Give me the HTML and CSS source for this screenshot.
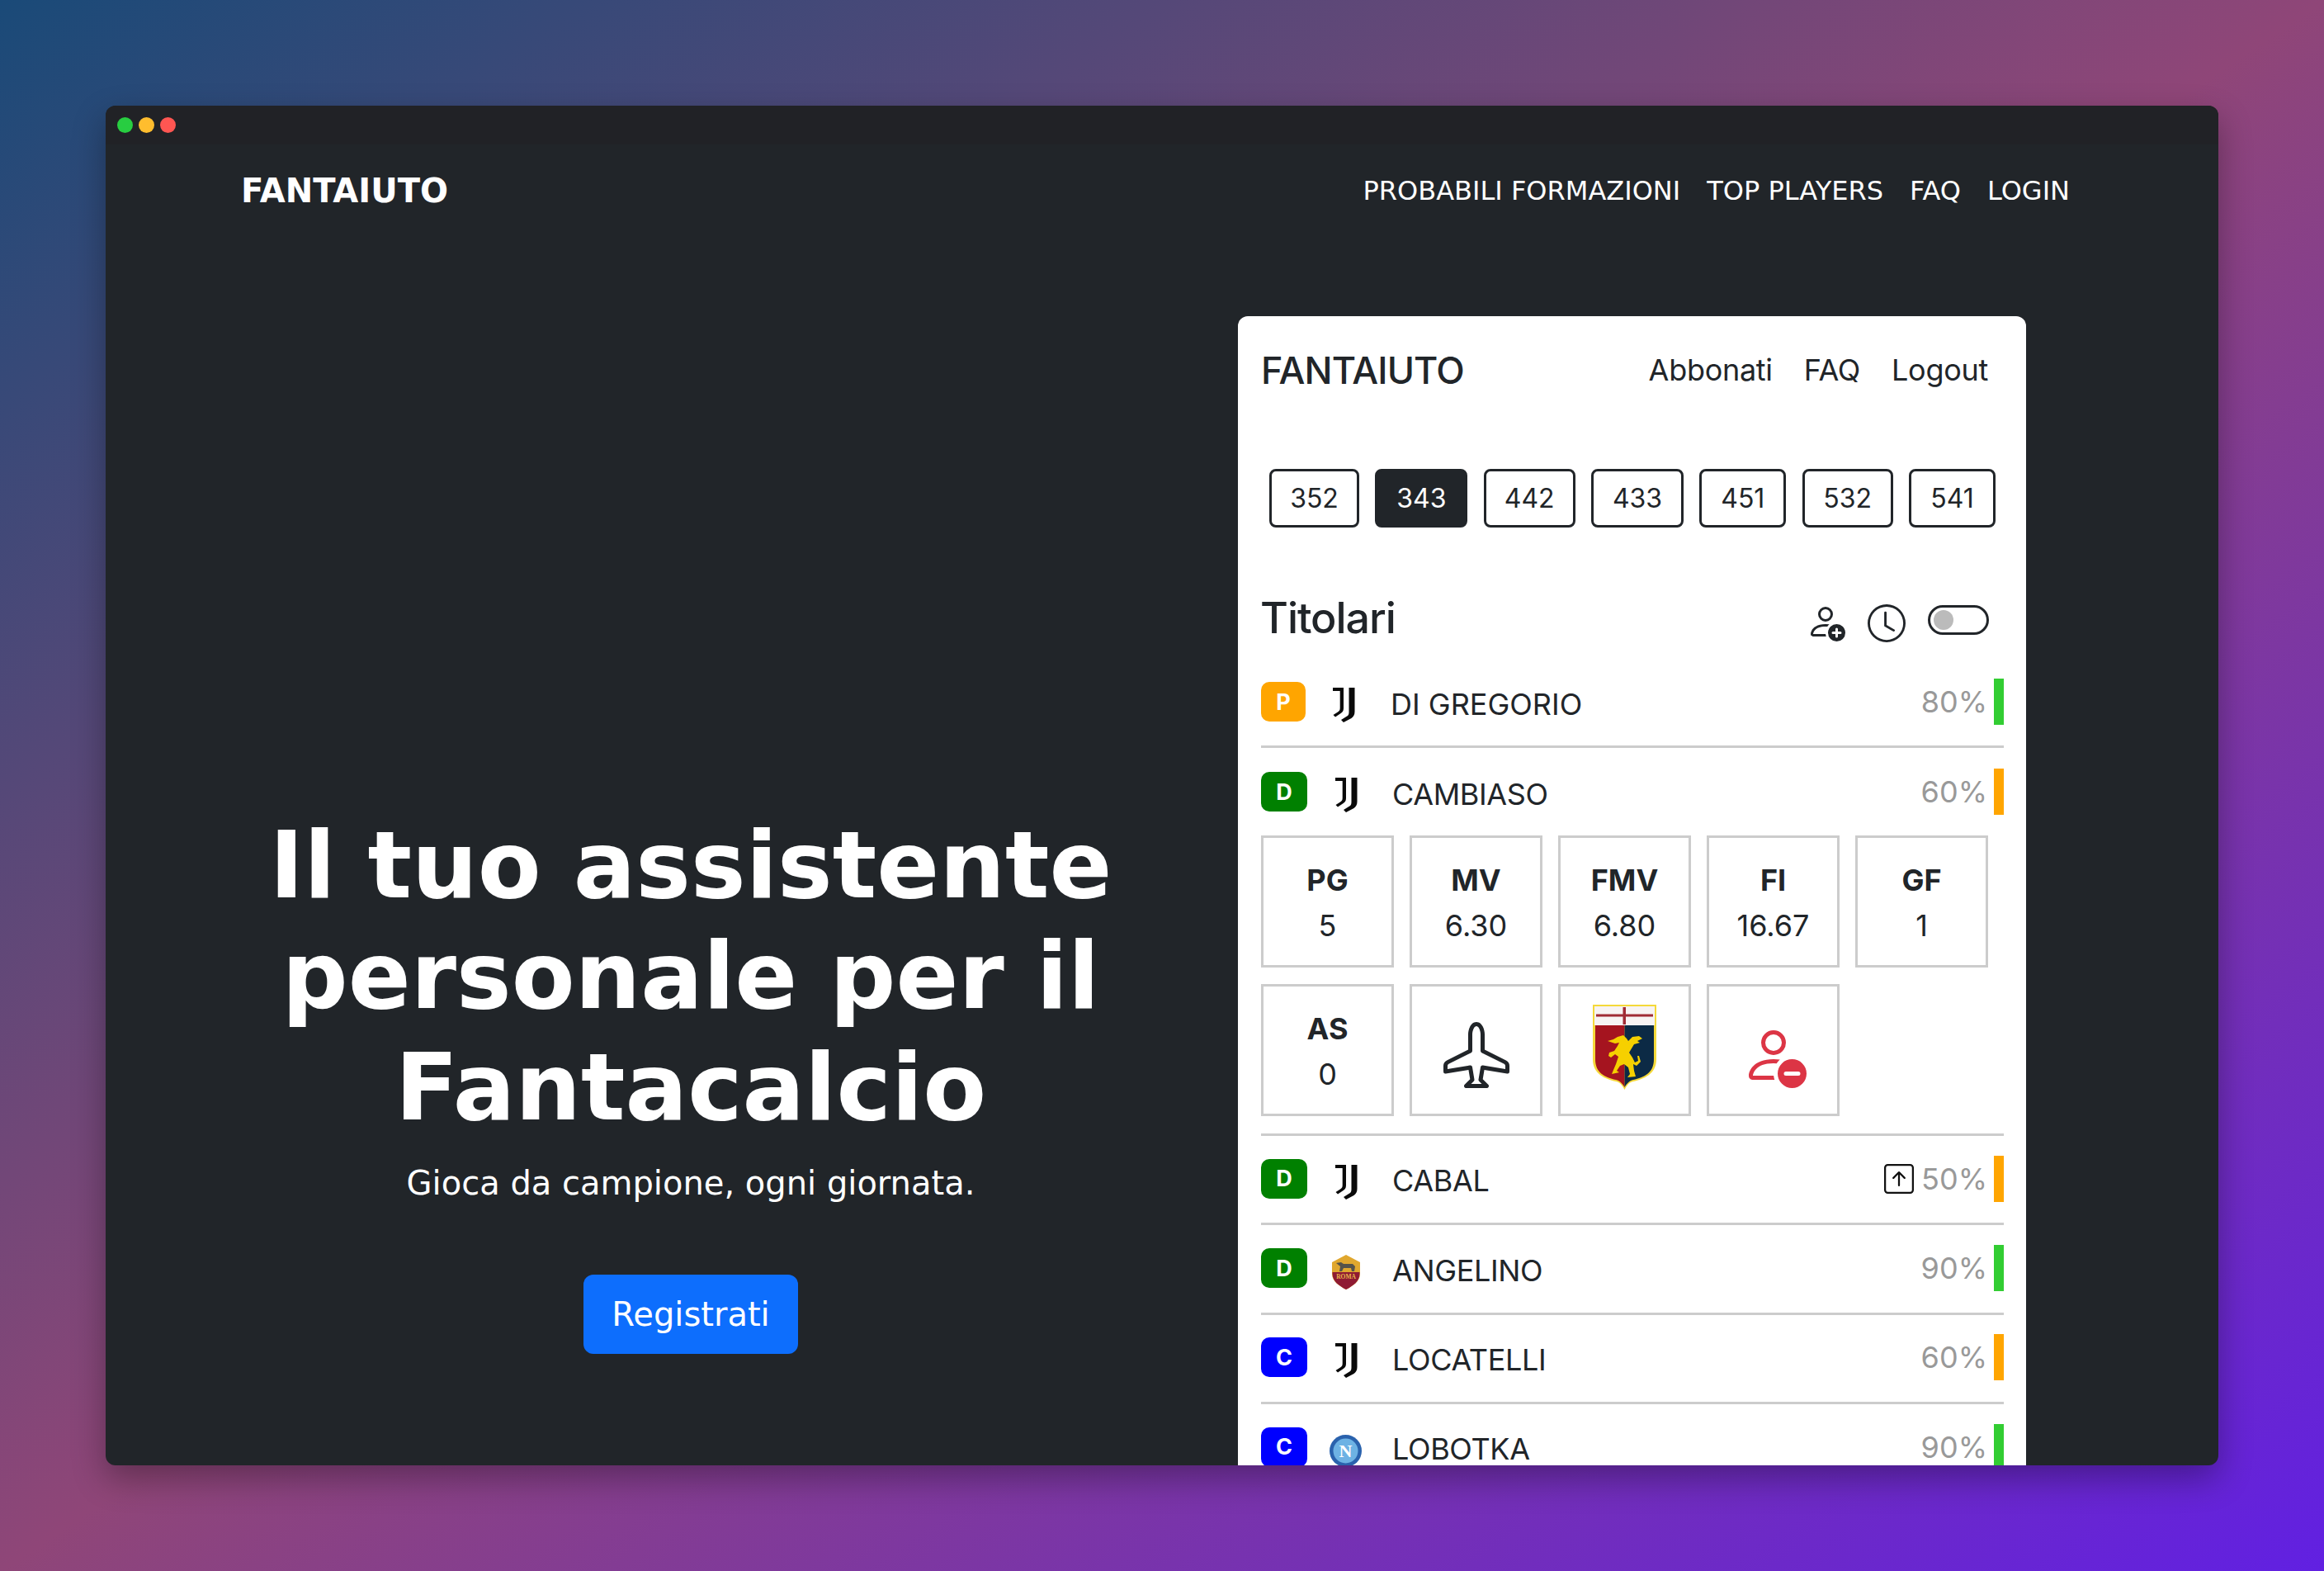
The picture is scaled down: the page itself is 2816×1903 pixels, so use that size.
FILE: index.html
```html
<!DOCTYPE html>
<html lang="it">
<head>
<meta charset="utf-8">
<title>Fantaiuto</title>
<link rel="stylesheet" href="styles.css">
</head>
<body>
<svg class="defs" width="0" height="0" aria-hidden="true">
  <defs>
    <symbol id="juve" viewBox="0 0 28 42">
      <path d="M0 0H13V25C13 28.500 11.500 30 9 31.500L3 35.500L0.500 33L6 29.500C8 28 8.700 27 8.700 24.500V4H0Z" fill="#0a0a0a"/>
      <path d="M19.500 0H26.500V29C26.500 33 25 35 22.500 37L13 42L10 39L18 34C19 33 19.500 32 19.500 29.500Z" fill="#0a0a0a"/>
    </symbol>
  </defs>
</svg>
<main class="window">
  <div class="titlebar">
    <span class="dot dot-green"></span>
    <span class="dot dot-yellow"></span>
    <span class="dot dot-red"></span>
  </div>
  <nav class="topnav">
    <a class="brand">FANTAIUTO</a>
    <ul class="navlinks">
      <li>PROBABILI FORMAZIONI</li>
      <li>TOP PLAYERS</li>
      <li>FAQ</li>
      <li>LOGIN</li>
    </ul>
  </nav>
  <section class="hero">
    <div class="hero-text">
      <h1>Il tuo assistente personale per il Fantacalcio</h1>
      <p>Gioca da campione, ogni giornata.</p>
      <a class="cta">Registrati</a>
    </div>
    <div class="phone">
      <header class="app-head">
        <span class="app-brand">FANTAIUTO</span>
        <span class="app-links"><a>Abbonati</a><a>FAQ</a><a>Logout</a></span>
      </header>
      <div class="pills">
        <button class="pill w109">352</button>
        <button class="pill w112 active">343</button>
        <button class="pill w111">442</button>
        <button class="pill w112">433</button>
        <button class="pill w105">451</button>
        <button class="pill w110">532</button>
        <button class="pill w105">541</button>
      </div>
      <div class="section-head">
        <h2>Titolari</h2>
        <div class="tools">
          <svg class="ico-add" viewBox="0 0 16 16" fill="#212529"><path d="M12.500 16a3.500 3.500 0 1 0 0-7 3.500 3.500 0 0 0 0 7m.5-5v1h1a.5.5 0 0 1 0 1h-1v1a.5.5 0 0 1-1 0v-1h-1a.5.5 0 0 1 0-1h1v-1a.5.5 0 0 1 1 0m-2-6a3 3 0 1 1-6 0 3 3 0 0 1 6 0M8 7a2 2 0 1 0 0-4 2 2 0 0 0 0 4"/><path d="M8.256 14a4.500 4.500 0 0 1-.229-1.004H3c.001-.246.154-.986.832-1.664C4.484 10.680 5.711 10 8 10q.39 0 .74.025c.226-.341.496-.65.804-.918Q8.844 9.002 8 9c-5 0-6 3-6 4s1 1 1 1z"/></svg>
          <svg class="ico-clock" viewBox="0 0 16 16" fill="#212529"><path d="M8 3.500a.5.5 0 0 0-1 0V9a.5.5 0 0 0 .252.434l3.500 2a.5.5 0 0 0 .496-.868L8 8.710z"/><path d="M8 16A8 8 0 1 0 8 0a8 8 0 0 0 0 16m7-8A7 7 0 1 1 1 8a7 7 0 0 1 14 0"/></svg>
          <span class="switch"><span class="knob"></span></span>
        </div>
      </div>

      <div class="row first">
        <span class="badge badge-p">P</span>
        <svg class="crest crest-first"><use href="#juve"/></svg>
        <span class="name name-first">DI GREGORIO</span>
        <span class="pct">80%</span>
        <span class="bar bar-green"></span>
      </div>

      <div class="row expanded">
        <span class="badge badge-d">D</span>
        <svg class="crest"><use href="#juve"/></svg>
        <span class="name">CAMBIASO</span>
        <span class="pct">60%</span>
        <span class="bar bar-orange"></span>
      </div>
      <div class="stats">
        <div class="stat"><b>PG</b><span>5</span></div>
        <div class="stat"><b>MV</b><span>6.30</span></div>
        <div class="stat"><b>FMV</b><span>6.80</span></div>
        <div class="stat"><b>FI</b><span>16.67</span></div>
        <div class="stat"><b>GF</b><span>1</span></div>
        <div class="stat"><b>AS</b><span>0</span></div>
        <div class="stat">
          <svg class="ico-plane" viewBox="0 0 16 16" fill="#212529"><path d="M6.428 1.151C6.708.591 7.213 0 8 0s1.292.592 1.572 1.151C9.861 1.730 10 2.431 10 3v3.691l5.170 2.585a1.500 1.500 0 0 1 .83 1.342V12a.5.5 0 0 1-.582.493l-5.507-.918-.375 2.253 1.318 1.318A.5.5 0 0 1 10.500 16h-5a.5.5 0 0 1-.354-.854l1.319-1.318-.376-2.253-5.507.918A.5.5 0 0 1 0 12v-1.382a1.500 1.500 0 0 1 .83-1.342L6 6.691V3c0-.568.14-1.271.428-1.849m.894.448C7.111 2.020 7 2.569 7 3v4a.5.5 0 0 1-.276.447l-5.448 2.724a.5.5 0 0 0-.276.447v.792l5.418-.903a.5.5 0 0 1 .575.41l.5 3a.5.5 0 0 1-.14.437L6.708 15h2.586l-.647-.646a.5.5 0 0 1-.14-.436l.5-3a.5.5 0 0 1 .576-.411L15 11.410v-.792a.5.5 0 0 0-.276-.447L9.276 7.447A.5.5 0 0 1 9 7V3c0-.432-.11-.979-.322-1.401C8.458 1.159 8.213 1 8 1s-.458.158-.678.599"/></svg>
        </div>
        <div class="stat">
          <svg class="genoa" viewBox="0 0 77 103">
            <path d="M0 0H77V66C77 84 62 90 49 93C44 94 41 98 38.500 103C36 98 33 94 28 93C15 90 0 84 0 66Z" fill="#f5d93a"/>
            <rect x="2" y="2" width="73" height="23" fill="#f7f3f3"/>
            <path d="M3 25H38.500V100C36 96 33 92 28 91C15 88 3 83 3 66Z" fill="#a5141f"/>
            <path d="M38.500 25H74V66C74 83 62 88 49 91C44 92 41 96 38.500 100Z" fill="#0c2a45"/>
            <rect x="4" y="11.500" width="69" height="3" fill="#a02b35"/>
            <rect x="36.500" y="3" width="3.500" height="21" fill="#a02b35"/>
            <path d="M30 39L37 37L41 41L43 44L48 39L56 38L60 41L54 44L57 46L50 48L47 53L44 58L48 64L51 70L55 68L54 62L56 62L58 69L53 74L49 72L50 80L52 87L42 88L45 84L43 76L38 72L33 74L29 80L32 82L23 84L25 79L28 72L31 63L27 60L22 64L19 62L20 58L26 56L30 50L32 46L27 47L18 44L25 42Z" fill="#f6d000"/>
          </svg>
        </div>
        <div class="stat">
          <svg class="ico-dash" viewBox="0 0 16 16" fill="#dc3545"><path d="M12.500 16a3.500 3.500 0 1 0 0-7 3.500 3.500 0 0 0 0 7M11 12h3a.5.5 0 0 1 0 1h-3a.5.5 0 0 1 0-1m0-7a3 3 0 1 1-6 0 3 3 0 0 1 6 0M8 7a2 2 0 1 0 0-4 2 2 0 0 0 0 4"/><path d="M8.256 14a4.500 4.500 0 0 1-.229-1.004H3c.001-.246.154-.986.832-1.664C4.484 10.680 5.711 10 8 10q.39 0 .74.025c.226-.341.496-.65.804-.918Q8.844 9.002 8 9c-5 0-6 3-6 4s1 1 1 1z"/></svg>
        </div>
      </div>

      <div class="row">
        <span class="badge badge-d">D</span>
        <svg class="crest"><use href="#juve"/></svg>
        <span class="name">CABAL</span>
        <svg class="ico-up" viewBox="0 0 16 16" fill="#111"><path d="M15 2a1 1 0 0 0-1-1H2a1 1 0 0 0-1 1v12a1 1 0 0 0 1 1h12a1 1 0 0 0 1-1zM0 2a2 2 0 0 1 2-2h12a2 2 0 0 1 2 2v12a2 2 0 0 1-2 2H2a2 2 0 0 1-2-2zm8.500 9.500a.5.5 0 0 1-1 0V5.707L5.354 7.854a.5.5 0 1 1-.708-.708l3-3a.5.5 0 0 1 .708 0l3 3a.5.5 0 0 1-.708.708L8.500 5.707z"/></svg>
        <span class="pct pct-tight">50%</span>
        <span class="bar bar-orange"></span>
      </div>

      <div class="row">
        <span class="badge badge-d">D</span>
        <svg class="crest crest-roma" viewBox="0 0 34 42">
          <path d="M17 0L34 9V23C34 32 25 38 17 42C9 38 0 32 0 23V9Z" fill="#e0a72e"/>
          <path d="M0.500 21H33.500V23C33.500 32 25 38 17 42C9 38 0.500 32 0.500 23Z" fill="#8f1b33"/>
          <path d="M5 10L11 9L14 11H25L28 14L27 20H24L23 16H14L12 20H9L10 14Z" fill="#55524a"/>
          <text x="17" y="29" text-anchor="middle" class="roma-t">ROMA</text>
        </svg>
        <span class="name">ANGELINO</span>
        <span class="pct">90%</span>
        <span class="bar bar-green"></span>
      </div>

      <div class="row">
        <span class="badge badge-c">C</span>
        <svg class="crest"><use href="#juve"/></svg>
        <span class="name">LOCATELLI</span>
        <span class="pct">60%</span>
        <span class="bar bar-orange"></span>
      </div>

      <div class="row">
        <span class="badge badge-c">C</span>
        <svg class="crest crest-napoli" viewBox="0 0 39 39">
          <circle cx="19.500" cy="19.500" r="19.500" fill="#2a62ad"/>
          <circle cx="19.500" cy="19.500" r="15" fill="#6db2e4"/>
          <text x="19.500" y="27" text-anchor="middle" class="napoli-n">N</text>
        </svg>
        <span class="name">LOBOTKA</span>
        <span class="pct">90%</span>
        <span class="bar bar-green"></span>
      </div>
    </div>
  </section>
</main>
</body>
</html>
```

FILE: styles.css
```css
* { box-sizing: border-box; }

html, body { margin: 0; height: 100%; }

body {
  width: 2816px;
  height: 1903px;
  padding: 128px;
  overflow: hidden;
  background: linear-gradient(to bottom right, #1a4a78 0%, #8f4678 50%, #6120e2 100%);
  font-family: "DejaVu Sans", sans-serif;
}

.defs { position: absolute; }

.window {
  width: 2560px;
  height: 1647px;
  display: flex;
  flex-direction: column;
  background: #212529;
  border-radius: 12px;
  overflow: hidden;
  box-shadow: 0 16px 40px rgba(0, 0, 0, 0.32);
  color: #fff;
}

.titlebar {
  height: 47px;
  flex: none;
  display: flex;
  align-items: center;
  gap: 7px;
  padding-left: 14px;
  background: #212226;
}

.dot { width: 19px; height: 19px; border-radius: 50%; }
.dot-green { background: #28cd41; }
.dot-yellow { background: #ffbd2e; }
.dot-red { background: #ff5652; }

.topnav {
  flex: none;
  display: flex;
  align-items: center;
  justify-content: space-between;
  height: 112px;
  padding: 0 180px 0 164px;
}

.brand { font-size: 40px; font-weight: 700; }

.navlinks {
  list-style: none;
  display: flex;
  gap: 32px;
  margin: 0;
  padding: 0;
  font-size: 32px;
}

.hero {
  flex: 1;
  min-height: 0;
  display: flex;
  align-items: flex-start;
  padding-left: 159px;
}

.hero-text {
  width: 1100px;
  margin-top: 694px;
  text-align: center;
  flex: none;
}

.hero-text h1 {
  margin: 0;
  font-size: 112px;
  line-height: 134.4px;
  font-weight: 700;
}

.hero-text p {
  margin: 19px 0 0;
  font-size: 40px;
  line-height: 60px;
}

.cta {
  display: inline-block;
  margin-top: 81px;
  width: 260px;
  height: 96px;
  line-height: 96px;
  border-radius: 12px;
  background: #0d6efd;
  font-size: 40px;
}

.phone {
  flex: none;
  width: 955px;
  margin: 96px 0 0 113px;
  padding: 0 27px 0 28px;
  background: #fff;
  border-radius: 12px 12px 0 0;
  color: #212529;
  font-family: Inter, sans-serif;
}

.app-head {
  display: flex;
  align-items: center;
  justify-content: space-between;
  height: 130px;
  padding: 0 19px 0 0;
}

.app-brand { font-size: 45px; font-weight: 500; letter-spacing: -0.02em; }

.app-links { display: flex; gap: 38px; font-size: 36px; letter-spacing: -0.008em; }

.pills {
  display: flex;
  gap: 19.33px;
  margin: 55px 0 0 10px;
}

.pill {
  height: 71px;
  padding: 0;
  background: #fff;
  color: #212529;
  border: 3px solid #212529;
  border-radius: 8px;
  font: 32px Inter, sans-serif;
}
.w105 { width: 105px; }
.w109 { width: 109px; }
.w110 { width: 110px; }
.w111 { width: 111px; }
.w112 { width: 112px; }
.pill.active { background: #212529; color: #fff; }

.section-head {
  display: flex;
  align-items: flex-start;
  justify-content: space-between;
  height: 56px;
  margin-top: 82px;
  padding-right: 18px;
}

.section-head h2 { margin: 0 0 0 -1px; font-size: 52px; font-weight: 500; line-height: 56px; letter-spacing: -0.02em; }

.tools { display: flex; align-items: flex-start; gap: 27px; }
.ico-add { width: 48px; height: 48px; margin-top: 8px; }
.ico-clock { width: 46px; height: 46px; margin-top: 11px; }
.switch {
  width: 74px;
  height: 36px;
  margin-top: 12px;
  border: 3px solid #212529;
  border-radius: 18px;
  display: flex;
  align-items: center;
  padding-left: 4px;
}
.knob { width: 24px; height: 24px; border-radius: 50%; background: #bbb; }

.row {
  display: flex;
  align-items: center;
  height: 108.400px;
  padding-bottom: 2px;
  border-top: 3px solid #ccc;
  font-size: 36px;
}
.row.first { border-top: 0; margin-top: 20px; height: 106px; padding-bottom: 0; }
.row.expanded { height: 109px; padding-bottom: 0; }

.badge {
  flex: none;
  width: 56px;
  height: 48px;
  border-radius: 10px;
  color: #fff;
  font-weight: 700;
  font-size: 27px;
  display: flex;
  align-items: center;
  justify-content: center;
}
.badge-p { background: #ffa500; width: 54px; }
.badge-d { background: #008000; }
.badge-c { background: #0000ff; }

.crest { flex: none; width: 28px; height: 42px; margin: 8px 0 0 34px; }
.crest-first { margin-left: 33px; }
.crest-roma { width: 34px; margin: 9px 0 0 30px; }
.crest-napoli { width: 39px; height: 39px; margin: 10px 0 0 27px; }

.napoli-n { font: 700 22px "Liberation Serif", serif; fill: #fff; }
.roma-t { font: 700 7.500px "Liberation Serif", serif; fill: #e8b54a; }

.name { margin-left: 41px; margin-top: 5px; flex: 1; letter-spacing: -0.01em; }
.name-first { margin-left: 42px; letter-spacing: 0; }
.crest-roma + .name { margin-left: 39px; }
.crest-napoli + .name { margin-left: 37px; }

.pct { color: #999; }
.pct-tight { margin-left: 9px; }

.ico-up { width: 36px; height: 36px; }

.bar { width: 12px; height: 56px; margin-left: 8px; }
.bar-green { background: #32cd32; }
.bar-orange { background: #ffa500; }

.stats {
  display: grid;
  grid-template-columns: repeat(5, 161px);
  gap: 20px 19px;
  margin-bottom: 21px;
}

.stat {
  height: 160px;
  padding-top: 2px;
  border: 3px solid #ccc;
  display: flex;
  flex-direction: column;
  align-items: center;
  justify-content: center;
  font-size: 36px;
  gap: 11px;
}
.stat b { font-weight: 700; line-height: 44px; }
.stat span { line-height: 44px; }

.ico-plane, .ico-dash { width: 80px; height: 80px; margin-top: 9px; }
.genoa { width: 77px; height: 103px; margin-top: -9px; }
```
